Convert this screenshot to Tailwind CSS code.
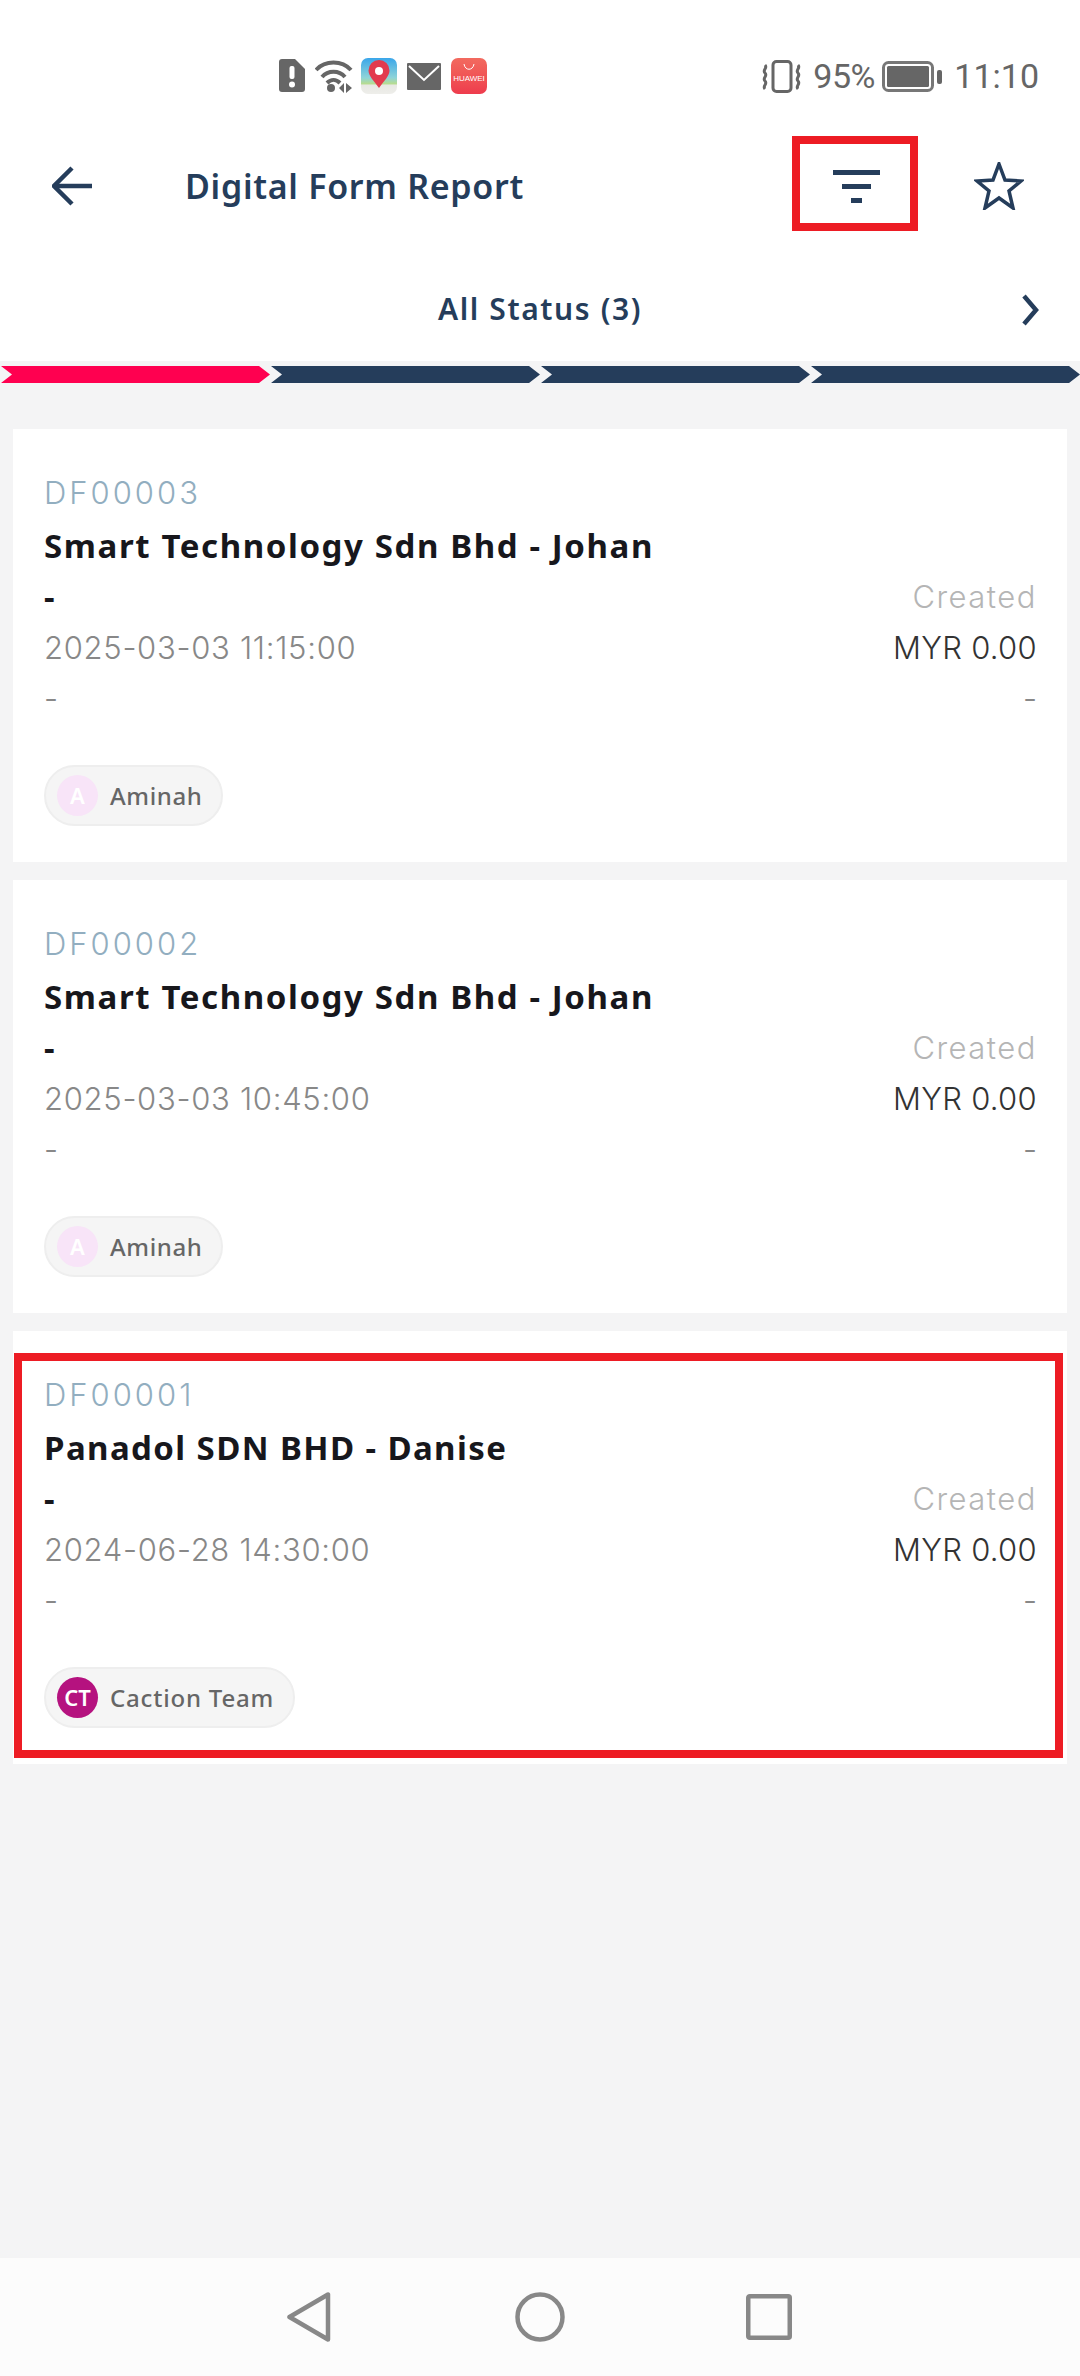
<!DOCTYPE html>
<html>
<head>
<meta charset="utf-8">
<script src="https://cdn.jsdelivr.net/npm/@tailwindcss/browser@4"></script>
</head>
<body class="m-0">
<div class="relative flex flex-col w-[1080px] h-[2376px] overflow-hidden bg-[#f4f4f5] font-['Noto_Sans',sans-serif]">
  <div class="bg-white">
    <!-- status bar -->
    <div class="flex items-center h-[90px] pt-[62px] pl-[279px] pr-[41px]">
      <svg class="w-[26px] h-[34px] mr-[10px]" viewBox="0 0 26 34"><path d="M3 0H16L26 10V30a3 3 0 0 1-3 3H3a3 3 0 0 1-3-3V3a3 3 0 0 1 3-3z" fill="#666"/><rect x="10.500" y="7" width="5" height="13" rx="2" fill="#fff"/><circle cx="13" cy="25.500" r="3" fill="#fff"/></svg>
      <svg class="w-[38px] h-[34px] mr-[8px]" viewBox="0 0 38 34" fill="none" stroke="#666" stroke-width="4"><path d="M1 11C10 1 27 1 36 11"/><path d="M7 18C13 11 24 11 30 18"/><path d="M12 24C16 20 21 20 25 24" /><circle cx="16" cy="29" r="4" fill="#666" stroke="none"/><path d="M29 24V34L24 29Z M31 24V34L37 29Z" fill="#666" stroke="none"/></svg>
      <svg class="w-[36px] h-[36px] mr-[10px]" viewBox="0 0 36 36"><defs><linearGradient id="m" x1="0" y1="0" x2="0" y2="1"><stop offset="0" stop-color="#3aa6ea"/><stop offset=".55" stop-color="#8fd4d8"/><stop offset=".72" stop-color="#b8dc8e"/><stop offset=".75" stop-color="#e8e8e4"/><stop offset="1" stop-color="#eeeeea"/></linearGradient></defs><rect width="36" height="36" rx="7" fill="url(#m)"/><path d="M18 30C13 23 7.500 18 7.500 12.500a10.500 10.500 0 0 1 21 0C28.500 18 23 23 18 30z" fill="#e23a4e"/><circle cx="18" cy="13" r="4" fill="#fff"/></svg>
      <svg class="w-[34px] h-[27px] mr-[10px]" viewBox="0 0 34 27"><rect width="34" height="27" rx="1" fill="#666"/><path d="M2 3L17 17L32 3" fill="none" stroke="#fff" stroke-width="2"/></svg>
      <div class="relative w-[36px] h-[36px] rounded-[7px] bg-gradient-to-b from-[#f26a5f] to-[#ee3b4d] flex flex-col items-center">
        <svg class="w-[12px] h-[6px] mt-[6px]" viewBox="0 0 12 6" fill="none" stroke="#fff" stroke-width="1"><path d="M1 0C2 7 10 7 11 0"/></svg>
        <span class="text-[8px] leading-[9px] mt-[4px] text-white font-['Liberation_Sans',sans-serif]">HUAWEI</span>
      </div>
      <div class="ml-auto flex items-center">
        <svg class="w-[40px] h-[33px] mr-[11px]" viewBox="0 0 40 33" fill="none" stroke="#666" stroke-width="3"><rect x="11" y="1.500" width="18" height="30" rx="3.500"/><path d="M3 5C6 8 0 10 3 13C6 16 0 18 3 21C6 24 0 26 3 29" stroke-width="3"/><path d="M36 5C39 8 33 10 36 13C39 16 33 18 36 21C39 24 33 26 36 29" stroke-width="3"/></svg>
        <span class="text-[34px] leading-[40px] text-[#666] w-[69px] font-['Roboto',sans-serif] tracking-[-0.5px]">95%</span>
        <svg class="w-[60px] h-[31px] mr-[12px]" viewBox="0 0 60 31"><rect x="1.500" y="1.500" width="49" height="28" rx="5" fill="none" stroke="#777" stroke-width="3"/><rect x="5" y="5" width="42" height="21" rx="1.500" fill="#666"/><rect x="55" y="9" width="5" height="14" rx="2" fill="#666"/></svg>
        <span class="text-[34px] leading-[40px] text-[#666] font-['Roboto',sans-serif]">11:10</span>
      </div>
    </div>
    <!-- header -->
    <div class="relative flex items-center h-[190px] pl-[52px] pt-[2px]">
      <svg class="w-[40px] h-[40px]" viewBox="0 0 40 40" fill="none" stroke="#253d5b" stroke-width="4.500"><path d="M20 2L2 20L20 38" stroke-linejoin="miter"/><path d="M2 20H40"/></svg>
      <span class="ml-[93px] text-[34px] leading-[44px] font-semibold text-[#253d5b] tracking-[0.7px]">Digital Form Report</span>
      <div class="ml-auto mr-[56px] flex items-center gap-[94px]">
        <div class="flex flex-col items-center gap-[9px] w-[47px]">
          <div class="h-[5px] w-[47px] bg-[#253d5b]"></div>
          <div class="h-[5px] w-[29px] bg-[#253d5b]"></div>
          <div class="h-[5px] w-[11px] bg-[#253d5b]"></div>
        </div>
        <svg class="w-[50px] h-[48px]" viewBox="0 0 50 48" fill="none" stroke="#253d5b" stroke-width="3.500" stroke-linejoin="miter"><path d="M25 2L31 18L47 19L35 29L39 46L25 36L11 46L15 29L3 19L19 18Z"/></svg>
      </div>
    </div>
    <!-- tabs title -->
    <div class="relative flex items-center justify-center h-[81px] pb-[23px]">
      <span class="text-[30px] leading-[40px] font-semibold text-[#253d5b] tracking-[1.6px]">All Status (3)</span>
      <svg class="absolute right-[41px] top-[14px] w-[18px] h-[32px]" viewBox="0 0 18 32" fill="none" stroke="#253d5b" stroke-width="4.500"><path d="M3 2L15 16L3 30"/></svg>
    </div>
  </div>
  <!-- steps -->
  <div class="flex mt-[5px] h-[17px]">
    <svg class="w-[270px] h-[17px]" viewBox="0 0 270 17"><path d="M1 0H259L270 8.500L259 17H1L12 8.500Z" fill="#ff0050"/></svg>
    <svg class="w-[270px] h-[17px]" viewBox="0 0 270 17"><path d="M1 0H259L270 8.500L259 17H1L12 8.500Z" fill="#253d5b"/></svg>
    <svg class="w-[270px] h-[17px]" viewBox="0 0 270 17"><path d="M1 0H259L270 8.500L259 17H1L12 8.500Z" fill="#253d5b"/></svg>
    <svg class="w-[270px] h-[17px]" viewBox="0 0 270 17"><path d="M1 0H259L270 8.500L259 17H1L12 8.500Z" fill="#253d5b"/></svg>
  </div>
  <!-- cards -->
  <div class="flex flex-col gap-[18px] px-[13px] pt-[46px]">
    <div class="h-[433px] bg-white pl-[31px] pr-[30px] pt-[37px]">
      <div class="h-[54px] leading-[53px] text-[31px] font-['Inter',sans-serif] font-light tracking-[3px] text-[#92aec0]">DF00003</div>
      <div class="h-[51px] leading-[51px] text-[33px] font-bold tracking-[1.6px] text-[#17171c]">Smart Technology Sdn Bhd - Johan</div>
      <div class="h-[51px] leading-[51px] flex justify-between font-['Inter',sans-serif] font-light text-[31px]"><span class="font-['Noto_Sans',sans-serif] text-[33px] font-bold text-[#17171c]">-</span><span class="tracking-[1.5px] text-[#b5b5b5]">Created</span></div>
      <div class="h-[51px] leading-[52px] flex justify-between font-['Inter',sans-serif] font-light text-[31px]"><span class="tracking-[0.7px] text-[#888]">2025-03-03 11:15:00</span><span class="tracking-[0.3px] text-[#333]">MYR 0.00</span></div>
      <div class="h-[51px] leading-[51px] flex justify-between font-['Inter',sans-serif] font-light text-[31px]"><span class="text-[#888]">-</span><span class="text-[#888]">-</span></div>
      <div class="mt-[41px] inline-flex items-center h-[61px] rounded-full bg-[#f5f5f5] border-2 border-[#eeeeee] pl-[11px] pr-[19px]">
        <span class="flex items-center justify-center w-[41px] h-[41px] rounded-full bg-[#f8e4f8] text-white text-[22px] font-semibold">A</span>
        <span class="ml-[12px] text-[24px] font-medium tracking-[0.6px] text-[#666]">Aminah</span>
      </div>
    </div>
    <div class="h-[433px] bg-white pl-[31px] pr-[30px] pt-[37px]">
      <div class="h-[54px] leading-[53px] text-[31px] font-['Inter',sans-serif] font-light tracking-[3px] text-[#92aec0]">DF00002</div>
      <div class="h-[51px] leading-[51px] text-[33px] font-bold tracking-[1.6px] text-[#17171c]">Smart Technology Sdn Bhd - Johan</div>
      <div class="h-[51px] leading-[51px] flex justify-between font-['Inter',sans-serif] font-light text-[31px]"><span class="font-['Noto_Sans',sans-serif] text-[33px] font-bold text-[#17171c]">-</span><span class="tracking-[1.5px] text-[#b5b5b5]">Created</span></div>
      <div class="h-[51px] leading-[52px] flex justify-between font-['Inter',sans-serif] font-light text-[31px]"><span class="tracking-[0.7px] text-[#888]">2025-03-03 10:45:00</span><span class="tracking-[0.3px] text-[#333]">MYR 0.00</span></div>
      <div class="h-[51px] leading-[51px] flex justify-between font-['Inter',sans-serif] font-light text-[31px]"><span class="text-[#888]">-</span><span class="text-[#888]">-</span></div>
      <div class="mt-[41px] inline-flex items-center h-[61px] rounded-full bg-[#f5f5f5] border-2 border-[#eeeeee] pl-[11px] pr-[19px]">
        <span class="flex items-center justify-center w-[41px] h-[41px] rounded-full bg-[#f8e4f8] text-white text-[22px] font-semibold">A</span>
        <span class="ml-[12px] text-[24px] font-medium tracking-[0.6px] text-[#666]">Aminah</span>
      </div>
    </div>
    <div class="h-[433px] bg-white pl-[31px] pr-[30px] pt-[37px]">
      <div class="h-[54px] leading-[53px] text-[31px] font-['Inter',sans-serif] font-light tracking-[3px] text-[#92aec0]">DF00001</div>
      <div class="h-[51px] leading-[51px] text-[33px] font-bold tracking-[1.4px] text-[#17171c]">Panadol SDN BHD - Danise</div>
      <div class="h-[51px] leading-[51px] flex justify-between font-['Inter',sans-serif] font-light text-[31px]"><span class="font-['Noto_Sans',sans-serif] text-[33px] font-bold text-[#17171c]">-</span><span class="tracking-[1.5px] text-[#b5b5b5]">Created</span></div>
      <div class="h-[51px] leading-[52px] flex justify-between font-['Inter',sans-serif] font-light text-[31px]"><span class="tracking-[0.7px] text-[#888]">2024-06-28 14:30:00</span><span class="tracking-[0.3px] text-[#333]">MYR 0.00</span></div>
      <div class="h-[51px] leading-[51px] flex justify-between font-['Inter',sans-serif] font-light text-[31px]"><span class="text-[#888]">-</span><span class="text-[#888]">-</span></div>
      <div class="mt-[41px] inline-flex items-center h-[61px] rounded-full bg-[#f5f5f5] border-2 border-[#eeeeee] pl-[11px] pr-[19px]">
        <span class="flex items-center justify-center w-[41px] h-[41px] rounded-full bg-[#b5127f] text-white text-[22px] font-semibold">CT</span>
        <span class="ml-[12px] text-[24px] font-medium tracking-[0.8px] text-[#666]">Caction Team</span>
      </div>
    </div>
  </div>
  <!-- bottom nav -->
  <div class="mt-auto h-[118px] bg-[#fcfcfc] relative flex items-center pl-[287px]">
    <svg class="w-[44px] h-[50px]" viewBox="0 0 44 50" fill="none" stroke="#888" stroke-width="4.500" stroke-linejoin="round"><path d="M2.500 25L41 2.500V47.500Z"/></svg>
    <svg class="ml-[184px] w-[50px] h-[50px]" viewBox="0 0 50 50" fill="none" stroke="#888" stroke-width="4.500"><circle cx="25" cy="25" r="22.500"/></svg>
    <svg class="ml-[181px] w-[46px] h-[46px]" viewBox="0 0 46 46" fill="none" stroke="#888" stroke-width="4.500" stroke-linejoin="round"><rect x="2.250" y="2.250" width="41.500" height="41.500" rx="1.500"/></svg>
  </div>
  <!-- red annotations -->
  <div class="absolute left-[792px] top-[136px] w-[126px] h-[95px] border-[8px] border-[#ed1c24]"></div>
  <div class="absolute left-[14px] top-[1353px] w-[1049px] h-[405px] border-[8px] border-[#ed1c24]"></div>
</div>
</body>
</html>
